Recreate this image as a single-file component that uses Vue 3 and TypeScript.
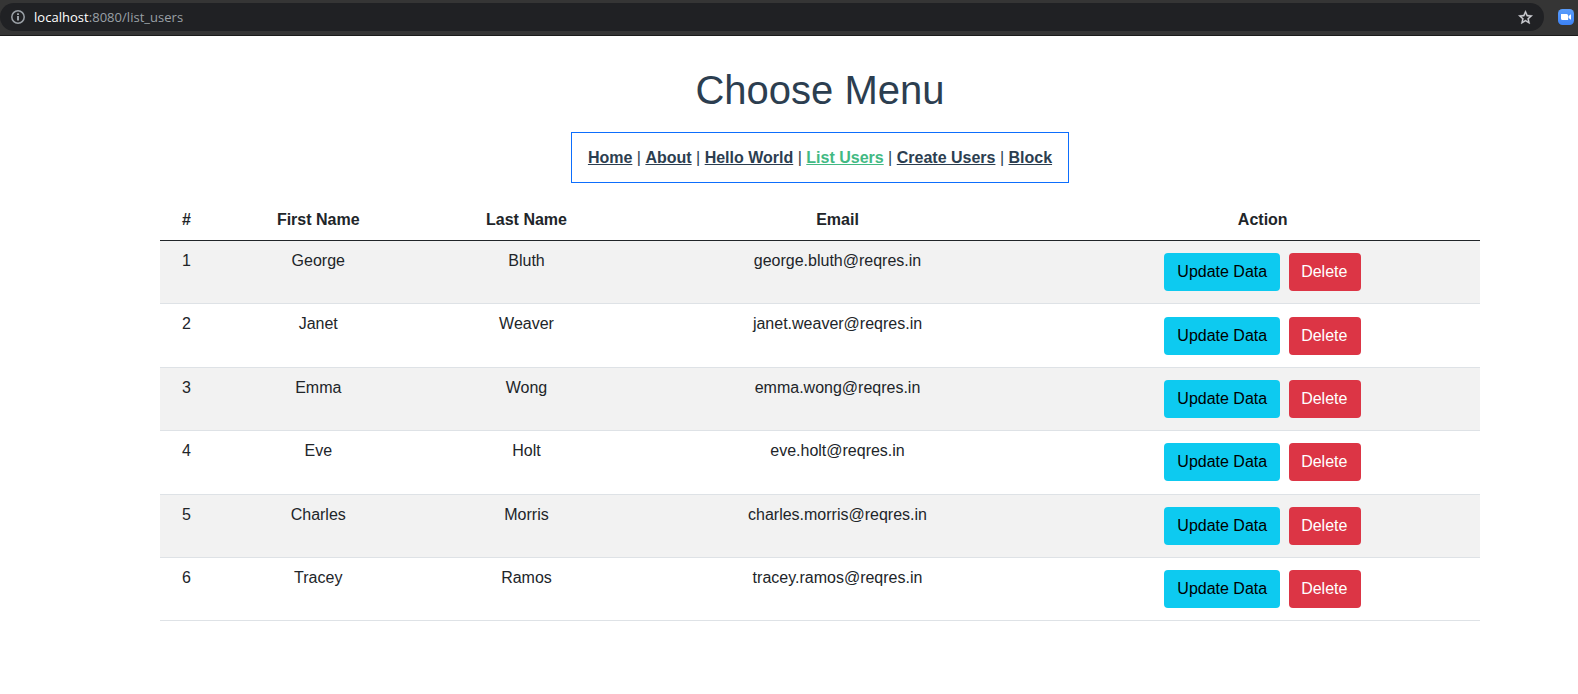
<script setup lang="ts">
interface User {
  id: number
  first: string
  last: string
  email: string
}

const links: string[] = ['Home', 'About', 'Hello World', 'List Users', 'Create Users', 'Block']
const active = 'List Users'

const users: User[] = [
  { id: 1, first: 'George', last: 'Bluth', email: 'george.bluth@reqres.in' },
  { id: 2, first: 'Janet', last: 'Weaver', email: 'janet.weaver@reqres.in' },
  { id: 3, first: 'Emma', last: 'Wong', email: 'emma.wong@reqres.in' },
  { id: 4, first: 'Eve', last: 'Holt', email: 'eve.holt@reqres.in' },
  { id: 5, first: 'Charles', last: 'Morris', email: 'charles.morris@reqres.in' },
  { id: 6, first: 'Tracey', last: 'Ramos', email: 'tracey.ramos@reqres.in' },
]
</script>

<template>
  <div class="window">
    <header class="toolbar">
      <div class="omnibox">
        <svg class="info" width="14" height="14" viewBox="0 0 14 14">
          <circle cx="7" cy="7" r="6.2" fill="none" stroke="#9aa0a6" stroke-width="1.5" />
          <rect x="6" y="6" width="2" height="4.5" fill="#9aa0a6" />
          <rect x="6" y="3.3" width="2" height="1.7" fill="#9aa0a6" />
        </svg>
        <div class="url"><span class="host">localhost</span>:8080/list_users</div>
        <svg class="star" width="17" height="17" viewBox="0 0 24 24">
          <path
            fill="#d0d2d6"
            stroke="#d0d2d6"
            stroke-width="0.5"
            d="M22 9.24l-7.19-.62L12 2 9.19 8.63 2 9.24l5.46 4.73L5.82 21 12 17.27 18.18 21l-1.63-7.03L22 9.24zM12 15.4l-3.76 2.27 1-4.28-3.32-2.88 4.38-.38L12 6.1l1.71 4.04 4.38.38-3.32 2.88 1 4.28L12 15.4z"
          />
        </svg>
      </div>
      <svg class="camera" width="16" height="16" viewBox="0 0 16 16">
        <defs>
          <linearGradient id="cam" x1="0" y1="0" x2="0" y2="1">
            <stop offset="0" stop-color="#5a9dfb" />
            <stop offset="1" stop-color="#3c82f6" />
          </linearGradient>
        </defs>
        <rect width="16" height="16" rx="4.500" fill="url(#cam)" />
        <path fill="#fff" d="M3 5h5.600a1.500 1.500 0 0 1 1.500 1.500V11H4.500A1.500 1.500 0 0 1 3 9.500zM10.600 7l2.400-1.700v5.400L10.600 9z" />
      </svg>
    </header>

    <main class="content">
      <h1>Choose Menu</h1>
      <nav class="menu">
        <template v-for="(link, i) in links" :key="link">
          <template v-if="i > 0"> | </template>
          <a :class="{ active: link === active }">{{ link }}</a>
        </template>
      </nav>

      <table class="users">
        <colgroup>
          <col class="c-id" />
          <col class="c-first" />
          <col class="c-last" />
          <col class="c-email" />
          <col class="c-action" />
        </colgroup>
        <thead>
          <tr>
            <th>#</th>
            <th>First Name</th>
            <th>Last Name</th>
            <th>Email</th>
            <th>Action</th>
          </tr>
        </thead>
        <tbody>
          <tr v-for="user in users" :key="user.id">
            <td>{{ user.id }}</td>
            <td>{{ user.first }}</td>
            <td>{{ user.last }}</td>
            <td>{{ user.email }}</td>
            <td>
              <div class="actions">
                <button class="btn info-btn">Update Data</button>
                <button class="btn danger-btn">Delete</button>
              </div>
            </td>
          </tr>
        </tbody>
      </table>
    </main>
  </div>
</template>

<style>
body {
  margin: 0;
  background: #fff;
}
</style>

<style scoped>
.window {
  height: 694px;
  overflow: hidden;
  font-family: 'Liberation Sans', Arial, sans-serif;
  font-size: 16px;
  line-height: 24px;
  color: #2c3e50;
}
.toolbar {
  display: flex;
  box-sizing: border-box;
  height: 36px;
  padding-top: 3px;
  background: #353535;
  border-bottom: 1px solid #1b1b1b;
}
.omnibox {
  display: flex;
  align-items: center;
  box-sizing: border-box;
  width: 1544px;
  height: 28px;
  padding: 0 10px 0 11px;
  background: #202124;
  border-radius: 14px;
}
.url {
  flex: 1;
  margin-left: 9px;
  font-family: 'Open Sans', sans-serif;
  font-size: 13px;
  line-height: 28px;
  letter-spacing: 0.03px;
  color: #9aa0a6;
}
.host {
  color: #fff;
}
.camera {
  margin: 6px 0 0 14px;
}
.content {
  display: flex;
  flex-direction: column;
  align-items: center;
  width: 1320px;
  margin-left: 160px;
  padding-top: 30px;
}
h1 {
  margin: 0 0 18px;
  font-size: 40px;
  font-weight: 400;
  line-height: 48px;
}
.menu {
  box-sizing: border-box;
  width: 498px;
  height: 51px;
  padding-top: 13px;
  border: 1px solid #0d6efd;
  text-align: center;
}
.menu a {
  font-weight: 700;
  color: #2c3e50;
  text-decoration: underline;
}
.menu a.active {
  color: #42b983;
}
.users {
  width: 1320px;
  margin-top: 17px;
  table-layout: fixed;
  border-collapse: separate;
  border-spacing: 0;
  color: #212529;
  text-align: center;
}
.c-id {
  width: 53px;
}
.c-first {
  width: 210.500px;
}
.c-last {
  width: 206px;
}
.c-email {
  width: 416px;
}
.users th {
  height: 41px;
  box-sizing: border-box;
  padding: 8px;
  border-bottom: 1px solid #212529;
}
.users td {
  box-sizing: border-box;
  height: 63.4px;
  padding: 8px;
  vertical-align: top;
  border-bottom: 1px solid #dee2e6;
}
.users tbody tr:nth-child(odd) {
  background: #f2f2f2;
}
.actions {
  display: flex;
  justify-content: center;
  gap: 9px;
  padding-top: 4.15px;
}
.btn {
  height: 38px;
  padding: 0;
  border: 0;
  border-radius: 4px;
  font: inherit;
}
.info-btn {
  width: 116px;
  background: #0dcaf0;
  color: #000;
}
.danger-btn {
  width: 72px;
  padding-right: 2px;
  background: #dc3545;
  color: #fff;
}
</style>
